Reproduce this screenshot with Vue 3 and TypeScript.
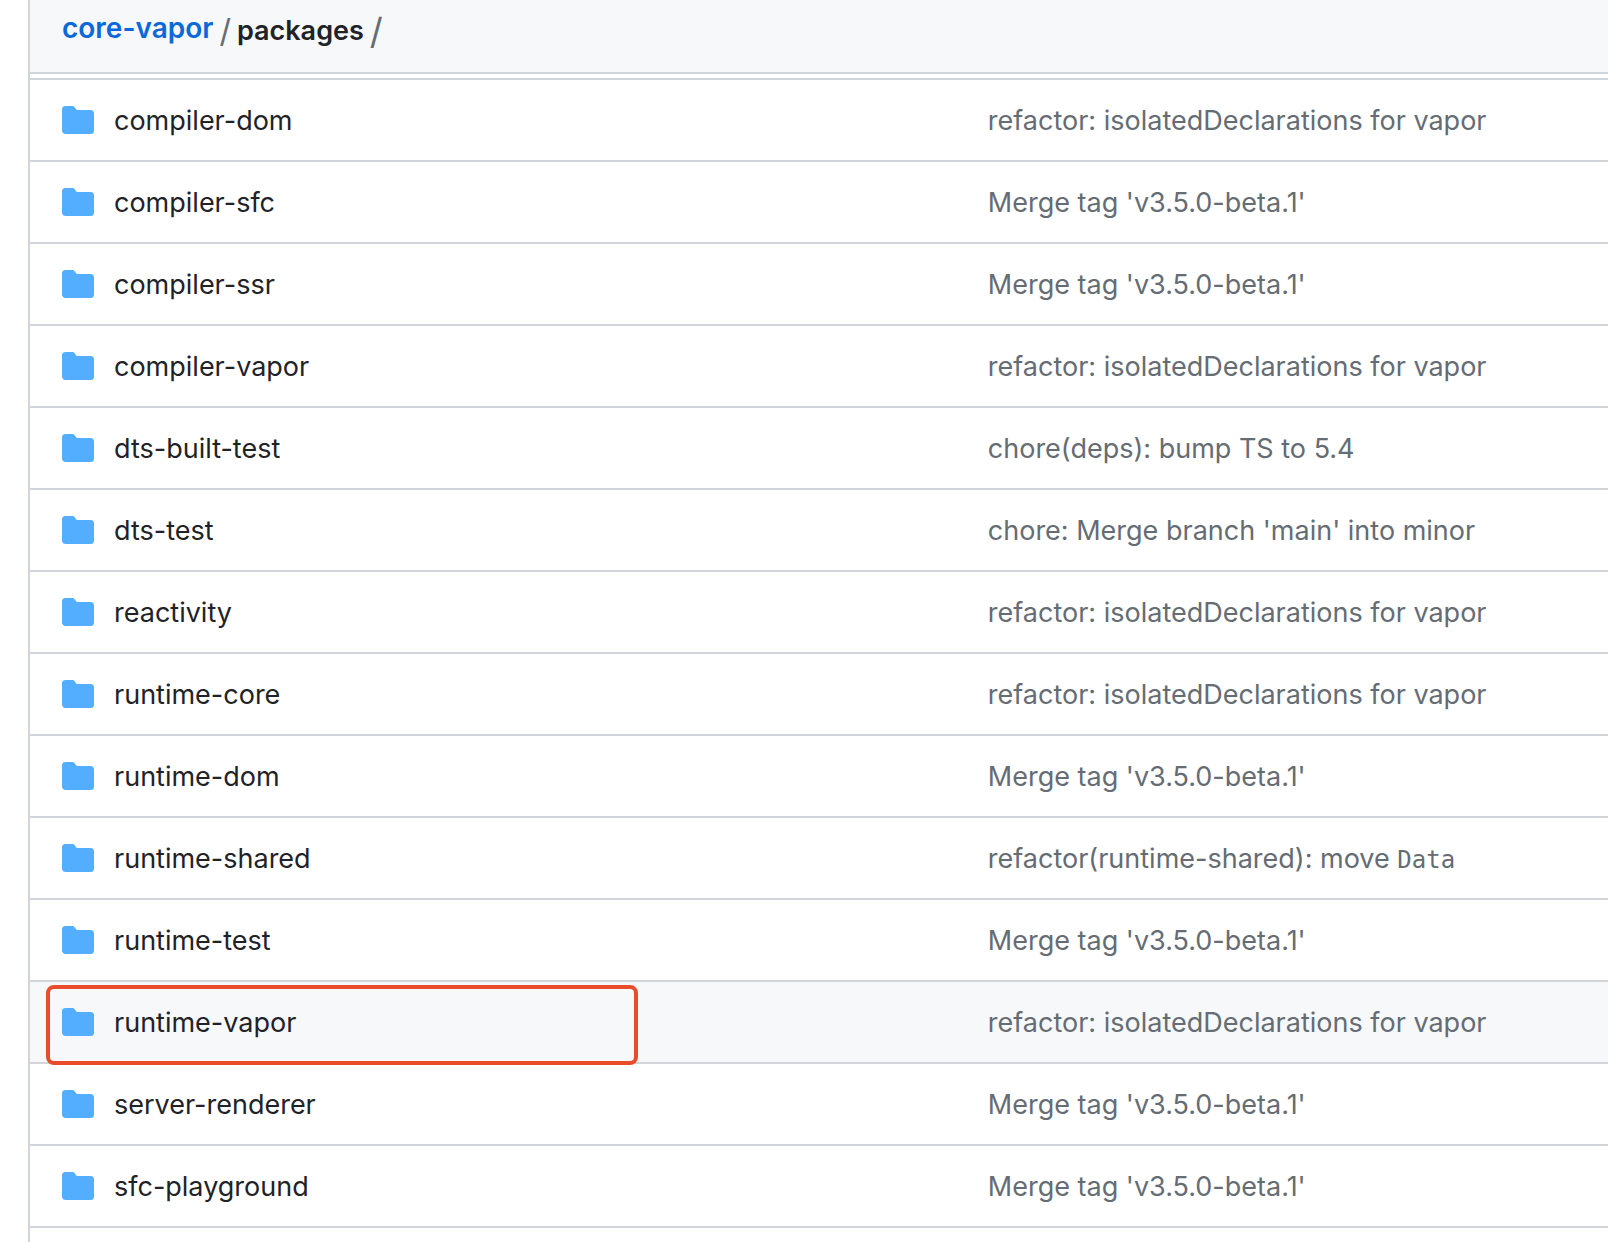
<script setup lang="ts">
interface Entry {
  name: string
  message: string
  code?: string
  active?: boolean
}

const declarations = 'refactor: isolatedDeclarations for vapor'
const beta = "Merge tag 'v3.5.0-beta.1'"

const entries: Entry[] = [
  { name: 'compiler-dom', message: declarations },
  { name: 'compiler-sfc', message: beta },
  { name: 'compiler-ssr', message: beta },
  { name: 'compiler-vapor', message: declarations },
  { name: 'dts-built-test', message: 'chore(deps): bump TS to 5.4' },
  { name: 'dts-test', message: "chore: Merge branch 'main' into minor" },
  { name: 'reactivity', message: declarations },
  { name: 'runtime-core', message: declarations },
  { name: 'runtime-dom', message: beta },
  { name: 'runtime-shared', message: 'refactor(runtime-shared): move ', code: 'Data' },
  { name: 'runtime-test', message: beta },
  { name: 'runtime-vapor', message: declarations, active: true },
  { name: 'server-renderer', message: beta },
  { name: 'sfc-playground', message: beta },
]
</script>

<template>
  <main class="browser">
    <header class="header">
      <nav class="crumbs" aria-label="Breadcrumb">
        <a class="repo" href="#">core-vapor</a>
        <div class="path">
          <span class="slash">/</span>
          <h1 class="current">packages</h1>
          <span class="slash large">/</span>
        </div>
      </nav>
    </header>
    <table class="files" aria-label="Folders">
      <colgroup>
        <col class="col-name" />
        <col />
      </colgroup>
      <tbody>
        <tr v-for="entry in entries" :key="entry.name" :class="{ active: entry.active }">
          <td class="name">
            <div class="entry">
              <svg class="folder" viewBox="0 0 16 16" aria-hidden="true">
                <path
                  d="M1.75 1A1.75 1.75 0 0 0 0 2.75v10.5C0 14.216.784 15 1.75 15h12.5A1.75 1.75 0 0 0 16 13.25v-8.5A1.75 1.75 0 0 0 14.25 3H7.5a.25.25 0 0 1-.2-.1l-.9-1.2C6.07 1.26 5.55 1 5 1H1.75Z"
                />
              </svg>
              <a class="title" href="#">{{ entry.name }}</a>
            </div>
            <div v-if="entry.active" class="marker"></div>
          </td>
          <td class="message">
            <a href="#">{{ entry.message }}<code v-if="entry.code">{{ entry.code }}</code></a>
          </td>
        </tr>
      </tbody>
    </table>
  </main>
</template>

<style>
body {
  margin: 0;
  background: #fff;
  overflow-x: hidden;
}
</style>

<style scoped>
.browser {
  box-sizing: border-box;
  min-height: 100vh;
  margin-left: 28px;
  border-left: 2px solid #d1d5d9;
  font-family: Inter, "Liberation Sans", sans-serif;
  font-size: 27px;
  line-height: 40px;
  color: #1f2328;
}

a {
  color: inherit;
  text-decoration: none;
}

.header {
  padding: 8px 32px 18px;
  background: #f6f8fa;
  border-bottom: 2px solid #ced6dd;
}

.crumbs {
  display: flex;
  align-items: flex-start;
  gap: 6px;
  font-weight: 600;
}

.repo {
  color: #0969da;
  font-size: 28px;
}

.path {
  display: flex;
  align-items: center;
  gap: 6px;
  line-height: 46px;
}

.slash {
  font-size: 32px;
  font-weight: 400;
  color: #656c73;
}

.slash.large {
  font-size: 36px;
}

.current {
  margin: 0;
  font-size: inherit;
  font-weight: inherit;
}

.files {
  width: 100%;
  margin-top: 4px;
  border-top: 2px solid #ced6dd;
  border-spacing: 0;
  table-layout: fixed;
}

.col-name {
  width: 60%;
}

td {
  padding: 21px 11px 19px;
  border-bottom: 2px solid #d1d5d9;
  white-space: nowrap;
}

.name {
  position: relative;
  padding-left: 32px;
}

.entry {
  display: flex;
  align-items: flex-start;
  gap: 20px;
}

.folder {
  width: 32px;
  height: 32px;
  margin-top: 3px;
  fill: #54aeff;
}

.message {
  color: #656c73;
}

.message code {
  font-family: "DejaVu Sans Mono", "Liberation Mono", monospace;
  font-size: 24px;
  line-height: 1;
}

.active {
  background: #f6f8fa;
}

.marker {
  position: absolute;
  top: 3px;
  left: 16px;
  box-sizing: border-box;
  width: 592px;
  height: 80px;
  border: 4px solid #e84c2b;
  border-radius: 8px;
}
</style>
